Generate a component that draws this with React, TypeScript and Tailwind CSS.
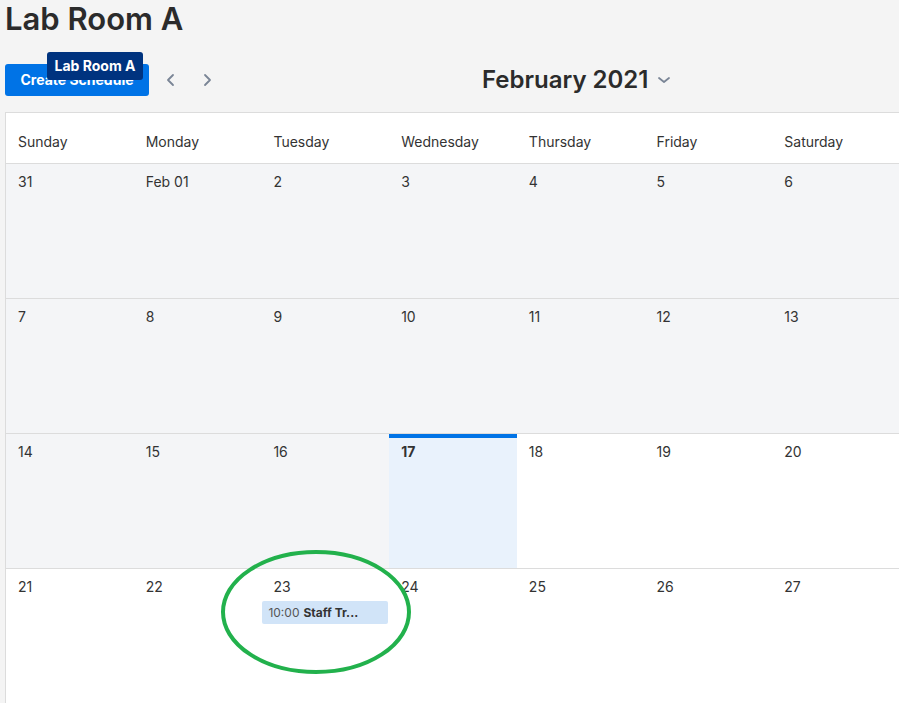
import React from "react";

const days = ["Sunday", "Monday", "Tuesday", "Wednesday", "Thursday", "Friday", "Saturday"];

const weeks: string[][] = [
  ["31", "Feb 01", "2", "3", "4", "5", "6"],
  ["7", "8", "9", "10", "11", "12", "13"],
  ["14", "15", "16", "17", "18", "19", "20"],
  ["21", "22", "23", "24", "25", "26", "27"],
];

// days before today are greyed out
const isPast = (w: number, d: number) => w < 2 || (w === 2 && d < 3);

const Chevron = ({ dir }: { dir: "left" | "right" | "down" }) => {
  const d = dir === "left" ? "M10 3 L5 8 L10 13" : dir === "right" ? "M6 3 L11 8 L6 13" : "M3 6 L8 10 L13 6";
  return (
    <svg width="16" height="16" viewBox="0 0 16 16" fill="none">
      <path d={d} stroke="#7a8596" strokeWidth="1.8" strokeLinecap="round" strokeLinejoin="round" />
    </svg>
  );
};

const App = () => {
  return (
    <div
      className="relative h-screen w-full overflow-hidden bg-[#f4f4f4] px-[5px] text-[#333]"
      style={{ fontFamily: "Inter, 'Noto Sans', sans-serif" }}
    >
      <h1 className="h-[38px] text-[31px] leading-[38px] font-semibold text-[#2b2b2b]">Lab Room A</h1>

      <div className="mt-[26px] flex h-8 items-center">
        <div className="relative">
          <button className="h-8 w-[144px] rounded-[3px] bg-[#0073e6] text-sm font-bold text-white">
            Create Schedule
          </button>
          <div className="absolute left-[42px] top-[-12px] flex h-7 w-[96px] items-center justify-center rounded-[3px] bg-[#00337f] text-sm font-bold text-white">
            Lab Room A
          </div>
        </div>
        <div className="ml-[14px] flex items-center gap-5">
          <Chevron dir="left" />
          <Chevron dir="right" />
        </div>
        <div className="ml-[267px] flex items-center gap-2">
          <span className="text-2xl leading-8 font-semibold text-[#2b2b2b]">February 2021</span>
          <Chevron dir="down" />
        </div>
      </div>

      <div className="mt-4 w-[895px] border-l border-t border-[#dcdcdc]">
        <div className="grid h-[51px] grid-cols-7 items-center border-b border-[#dcdcdc] bg-white pt-[7px]">
          {days.map((d) => (
            <div key={d} className="px-3 text-sm">
              {d}
            </div>
          ))}
        </div>
        {weeks.map((week, w) => (
          <div key={w} className="grid h-[135px] grid-cols-7 border-b border-[#dcdcdc]">
            {week.map((label, d) => {
              const today = w === 2 && d === 3;
              return (
                <div
                  key={label}
                  className={
                    today
                      ? "border-t-4 border-[#0073e6] bg-[#e9f2fc] px-3 pt-1"
                      : isPast(w, d)
                      ? "bg-[#f4f5f7] px-3 pt-2"
                      : "bg-white px-3 pt-2"
                  }
                >
                  <div className={today ? "text-sm leading-5 font-bold" : "text-sm leading-5"}>{label}</div>
                  {w === 3 && d === 2 && (
                    <div className="-mx-[11px] mt-1 flex h-[23px] items-center rounded-[2px] bg-[#d1e4f8] px-[6px] text-xs">
                      <span className="text-[#555]">10:00</span>
                      <span className="ml-1 font-bold">Staff Tr...</span>
                    </div>
                  )}
                </div>
              );
            })}
          </div>
        ))}
      </div>

      <svg className="pointer-events-none absolute left-[219px] top-[549px]" width="194" height="128" viewBox="0 0 194 128">
        <ellipse cx="97" cy="63" rx="93" ry="60" fill="none" stroke="#22b14c" strokeWidth="4" />
      </svg>
    </div>
  );
};

export default App;
